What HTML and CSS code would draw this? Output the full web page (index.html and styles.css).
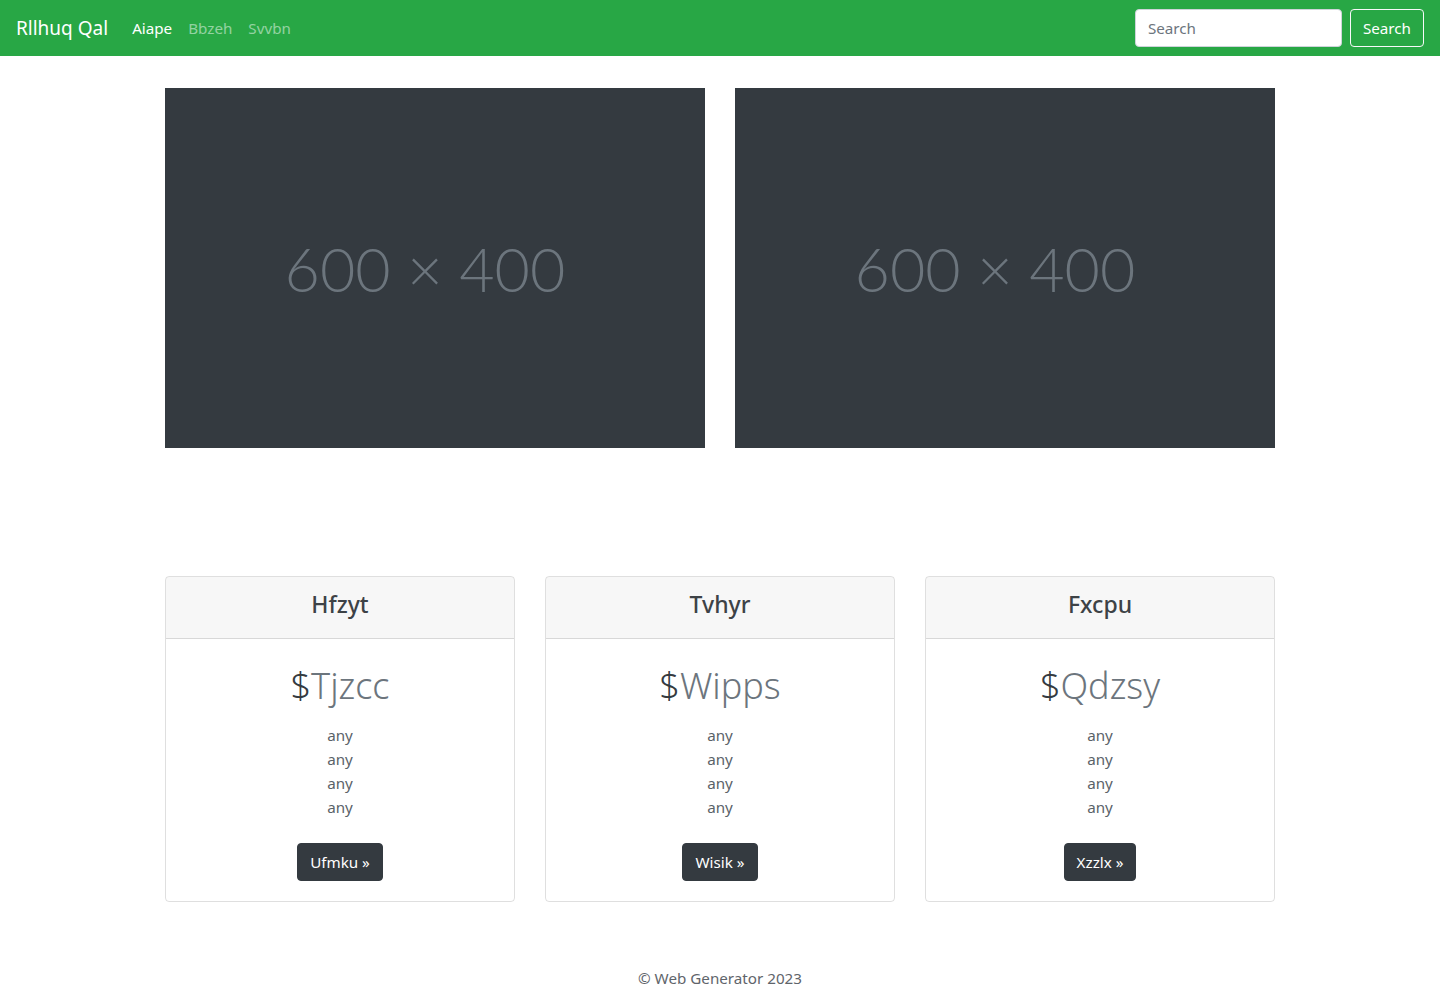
FILE: index.html
```html
<!DOCTYPE html>
<html lang="en">
<head>
<meta charset="utf-8">
<title>Rllhuq Qal</title>
<link rel="stylesheet" href="styles.css">
</head>
<body>
<nav class="navbar">
  <a class="brand" href="#">Rllhuq Qal</a>
  <ul class="nav-links">
    <li><a class="nav-link active" href="#">Aiape</a></li>
    <li><a class="nav-link" href="#">Bbzeh</a></li>
    <li><a class="nav-link" href="#">Svvbn</a></li>
  </ul>
  <form class="search-form">
    <input class="search-input" type="text" placeholder="Search">
    <button class="search-btn" type="button">Search</button>
  </form>
</nav>

<main class="container">
  <section class="image-row">
    <div class="placeholder"><span class="ph-text">600 × 400</span></div>
    <div class="placeholder"><span class="ph-text">600 × 400</span></div>
  </section>

  <section class="card-row">
    <div class="card">
      <div class="card-header"><h4 class="card-heading">Hfzyt</h4></div>
      <div class="card-body">
        <h1 class="price">$<span class="muted">Tjzcc</span></h1>
        <ul class="features"><li>any</li><li>any</li><li>any</li><li>any</li></ul>
        <button class="btn-dark" type="button">Ufmku »</button>
      </div>
    </div>
    <div class="card">
      <div class="card-header"><h4 class="card-heading">Tvhyr</h4></div>
      <div class="card-body">
        <h1 class="price">$<span class="muted">Wipps</span></h1>
        <ul class="features"><li>any</li><li>any</li><li>any</li><li>any</li></ul>
        <button class="btn-dark" type="button">Wisik »</button>
      </div>
    </div>
    <div class="card">
      <div class="card-header"><h4 class="card-heading">Fxcpu</h4></div>
      <div class="card-body">
        <h1 class="price">$<span class="muted">Qdzsy</span></h1>
        <ul class="features"><li>any</li><li>any</li><li>any</li><li>any</li></ul>
        <button class="btn-dark" type="button">Xzzlx »</button>
      </div>
    </div>
  </section>

  <footer class="footer">© Web Generator 2023</footer>
</main>
</body>
</html>
```

FILE: styles.css
```css
* { box-sizing: border-box; }
html, body { margin: 0; padding: 0; }
body {
  font-family: "Noto Sans", "Open Sans", sans-serif;
  font-size: 15.2px;
  line-height: 24px;
  color: #212529;
  background: #fff;
}
a { text-decoration: none; }

.navbar {
  display: flex;
  align-items: center;
  height: 56px;
  padding: 8px 16px;
  background: #28a745;
}
.brand {
  color: #fff;
  font-size: 19px;
  line-height: 30px;
  margin-right: 16px;
}
.nav-links {
  display: flex;
  list-style: none;
  margin: 0;
  padding: 0;
}
.nav-link {
  display: block;
  padding: 8px;
  color: rgba(255,255,255,0.5);
  font-size: 15.2px;
}
.nav-link.active { color: #fff; }
.search-form {
  margin-left: auto;
  display: flex;
  align-items: center;
  gap: 8px;
}
.search-input {
  width: 207px;
  height: 38px;
  padding: 6px 12px;
  font: inherit;
  font-size: 15.2px;
  color: #495057;
  border: 1px solid #ced4da;
  border-radius: 4px;
  background: #fff;
}
.search-input::placeholder { color: #6c757d; }
.search-btn {
  height: 38px;
  padding: 6px 12px;
  font: inherit;
  font-size: 15.2px;
  color: #fff;
  background: transparent;
  border: 1px solid #f8f9fa;
  border-radius: 4px;
}

.container {
  width: 1110px;
  margin: 0 auto;
}
.image-row {
  display: flex;
  gap: 30px;
  margin-top: 32px;
}
.placeholder {
  width: 540px;
  height: 360px;
  padding-right: 20px;
  background: #343a40;
  display: flex;
  align-items: center;
  justify-content: center;
}
.ph-text {
  font-family: "Lato", "Open Sans", sans-serif;
  font-weight: 300;
  font-size: 61px;
  line-height: 1;
  color: #6c757d;
}

.card-row {
  display: flex;
  gap: 30px;
  margin-top: 128px;
}
.card {
  width: 350px;
  border: 1px solid rgba(0,0,0,0.125);
  border-radius: 4px;
  text-align: center;
  overflow: hidden;
}
.card-header {
  background: rgba(0,0,0,0.03);
  border-bottom: 1px solid rgba(0,0,0,0.125);
  padding: 13px 20px 19px;
}
.card-heading {
  margin: 0;
  font-size: 23px;
  font-weight: 500;
  line-height: 28.8px;
  color: #3d4246;
}
.card-body {
  padding: 20px;
}
.price {
  margin: 0 0 16px;
  padding-top: 3px;
  height: 48px;
  font-size: 36px;
  font-weight: 300;
  line-height: 48px;
  color: #343a40;
}
.muted { color: #6c757d; }
.features {
  list-style: none;
  margin: 0 0 24px;
  padding: 0;
  color: #5a6268;
}
.btn-dark {
  height: 38px;
  padding: 6px 12px;
  font: inherit;
  font-size: 15.2px;
  color: #fff;
  background: #343a40;
  border: 1px solid #343a40;
  border-radius: 4px;
}

.footer {
  margin-top: 64px;
  text-align: center;
  color: #5f656b;
  line-height: 24px;
  padding-bottom: 48px;
}
```
